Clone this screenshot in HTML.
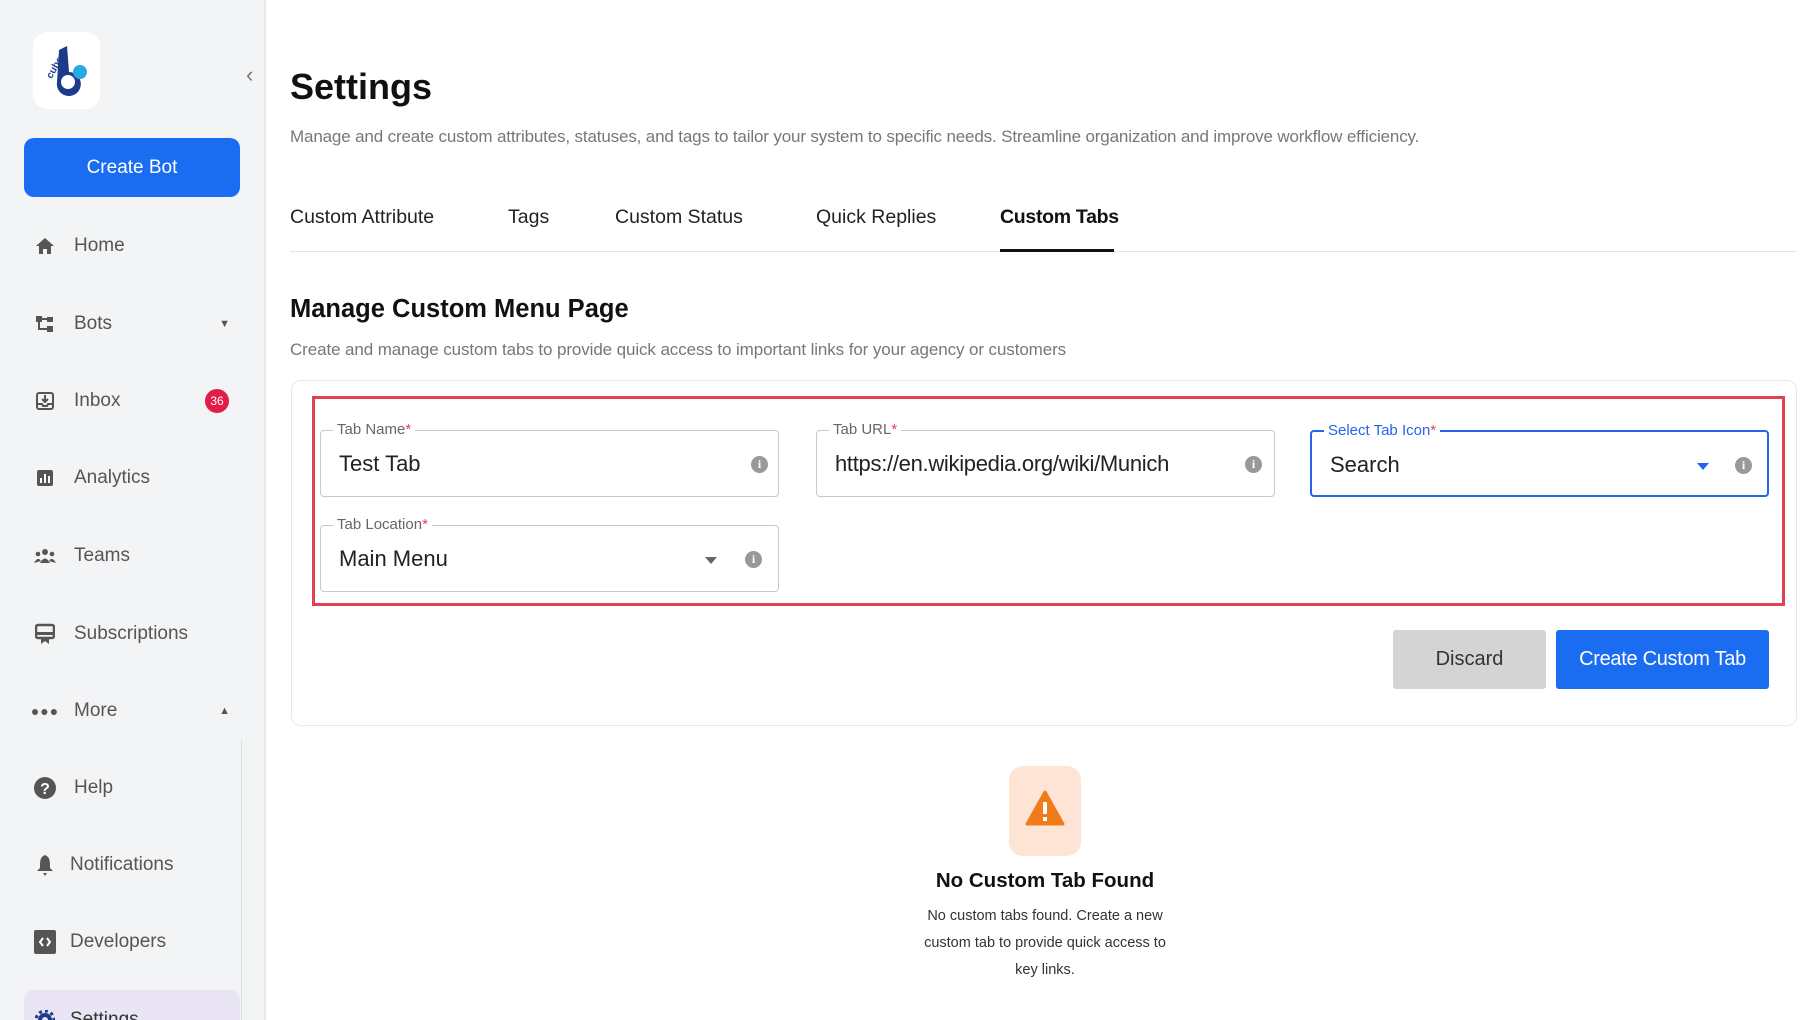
<!DOCTYPE html>
<html><head><meta charset="utf-8"><style>
*{box-sizing:border-box;margin:0;padding:0}
body{width:1806px;height:1020px;overflow:hidden;background:#fff;font-family:"Liberation Sans",sans-serif;position:relative;color:#222}
.sb{position:absolute;left:0;top:0;width:266px;height:1020px;background:#f3f4f6;border-right:2px solid #e5e7eb;overflow:hidden}
.logo{position:absolute;left:33px;top:32px;width:67px;height:77px;background:#fff;border-radius:14px}
.cb{position:absolute;left:24px;top:138px;width:216px;height:59px;background:#1a6cf0;border-radius:10px;color:#fff;font-size:19px;text-align:center;line-height:59px}
.ni{position:absolute;left:34px;font-size:19px;color:#555;display:flex;align-items:center;height:30px}
.ni .ic{width:22px;height:22px;margin-right:18px;display:flex;align-items:center;justify-content:center}
.a{position:absolute}
.tab{position:absolute;top:206px;font-size:19.5px;color:#222}
.fld{position:absolute;height:67px;border:1.5px solid #c8c8c8;border-radius:4px}
.fld .lb{position:absolute;top:-10px;left:12px;background:#fff;padding:0 4px;font-size:15px;color:#666}
.fld .lb i{color:#e0424f;font-style:normal}
.fld .v{position:absolute;left:18px;top:20px;font-size:22px;color:#222}
.info{position:absolute;top:25px;width:17px;height:17px;border-radius:50%;background:#999;color:#fff;font-size:12px;font-weight:bold;text-align:center;line-height:17px;font-family:"Liberation Serif",serif}
.dd{position:absolute;top:31px;width:0;height:0;border-left:6px solid transparent;border-right:6px solid transparent;border-top:7px solid #666}
</style></head><body>
<div class="sb">
 <div class="logo"><svg width="67" height="77" viewBox="0 0 67 77"><path d="M26 18 L34 14 L36 40 A12 12 0 1 1 24 50 Z" fill="#1e3a8a"/><circle cx="35" cy="50" r="7" fill="#fff"/><circle cx="47" cy="40" r="7" fill="#29a9e1"/><text x="12" y="44" font-size="10" fill="#1e3a8a" transform="rotate(-60 18 40)" font-weight="bold">cube</text></svg></div>
 <div class="a" style="left:246px;top:62px;color:#777;font-size:22px">&#8249;</div>
 <div class="cb">Create Bot</div>
 <div class="ni" style="top:231px"><span class="ic"><svg width="20" height="20"><path d="M10 2 L19 10 H16 V18 H12 V13 H8 V18 H4 V10 H1Z" fill="#555"/></svg></span>Home</div>
 <div class="ni" style="top:309px;width:196px"><span class="ic"><svg width="20" height="20"><rect x="1" y="2" width="6" height="6" fill="#555"/><rect x="12" y="3" width="6" height="5" fill="#555"/><rect x="12" y="12" width="6" height="6" fill="#555"/><path d="M4 8 V15 H12 M4 5 H12" stroke="#555" stroke-width="2" fill="none"/></svg></span>Bots<span style="margin-left:auto;font-size:11px">&#9660;</span></div>
 <div class="ni" style="top:386px"><span class="ic"><svg width="20" height="20"><rect x="2" y="2" width="16" height="16" rx="2" fill="none" stroke="#555" stroke-width="2"/><path d="M10 4 V11 M7 8 L10 11 L13 8 M2 13 H7 L8 15 H12 L13 13 H18" stroke="#555" stroke-width="2" fill="none"/></svg></span>Inbox</div>
 <div class="a" style="left:205px;top:389px;width:24px;height:24px;border-radius:50%;background:#e11d48;color:#fff;font-size:12px;text-align:center;line-height:24px">36</div>
 <div class="ni" style="top:463px"><span class="ic"><svg width="20" height="20"><rect x="2" y="2" width="16" height="16" rx="2" fill="#555"/><rect x="5" y="10" width="2" height="5" fill="#fff"/><rect x="9" y="6" width="2" height="9" fill="#fff"/><rect x="13" y="8" width="2" height="7" fill="#fff"/></svg></span>Analytics</div>
 <div class="ni" style="top:541px"><span class="ic"><svg width="22" height="20"><circle cx="11" cy="6" r="3" fill="#555"/><circle cx="4" cy="8" r="2.3" fill="#555"/><circle cx="18" cy="8" r="2.3" fill="#555"/><path d="M6 17 Q11 8 16 17Z M0 17 Q4 10 7 15 M15 15 Q18 10 22 17" fill="#555"/></svg></span>Teams</div>
 <div class="ni" style="top:619px"><span class="ic"><svg width="20" height="22"><rect x="1" y="2" width="18" height="13" rx="2" fill="none" stroke="#555" stroke-width="2.5"/><rect x="1" y="9" width="18" height="3" fill="#555"/><path d="M6 15 V21 L10 18 L14 21 V15Z" fill="#555"/></svg></span>Subscriptions</div>
 <div class="ni" style="top:696px;width:196px"><span class="ic" style="font-size:14px;letter-spacing:1px;color:#555">&#9679;&#9679;&#9679;</span>More<span style="margin-left:auto;font-size:11px">&#9650;</span></div>
 <div class="a" style="left:241px;top:740px;width:1px;height:280px;background:#ddd"></div>
 <div class="ni" style="top:773px"><span class="ic"><svg width="22" height="22"><circle cx="11" cy="11" r="11" fill="#555"/><text x="11" y="17" text-anchor="middle" font-size="16" font-weight="bold" fill="#fff" font-family="Liberation Sans">?</text></svg></span>Help</div>
 <div class="ni" style="top:850px;left:34px"><span class="ic" style="margin-right:14px"><svg width="18" height="22"><path d="M9 1 C4 3 4 7 4 14 L1 17 H17 L14 14 C14 7 14 3 9 1Z M7 19 H11 L9 22Z" fill="#555"/></svg></span>Notifications</div>
 <div class="ni" style="top:927px;left:34px"><span class="ic" style="margin-right:14px"><svg width="22" height="24"><rect x="0" y="0" width="22" height="24" rx="2" fill="#555"/><path d="M9 8 L6 12 L9 16 M13 8 L16 12 L13 16" stroke="#fff" stroke-width="2" fill="none"/></svg></span>Developers</div>
 <div class="a" style="left:24px;top:990px;width:216px;height:50px;background:#e9e5f5;border-radius:10px"></div>
 <div class="ni" style="top:1005px;left:34px;color:#333"><span class="ic" style="margin-right:14px"><svg width="20" height="20"><circle cx="10" cy="10" r="7" fill="#1e3a8a"/><circle cx="10" cy="10" r="9" fill="none" stroke="#1e3a8a" stroke-width="3" stroke-dasharray="3 3"/><circle cx="10" cy="10" r="3" fill="#e9e5f5"/></svg></span>Settings</div>
</div>

<div class="a" style="left:290px;top:66px;font-size:36px;font-weight:bold;color:#111">Settings</div>
<div class="a" style="left:290px;top:127px;font-size:17px;letter-spacing:-0.15px;color:#777">Manage and create custom attributes, statuses, and tags to tailor your system to specific needs. Streamline organization and improve workflow efficiency.</div>
<div class="tab" style="left:290px">Custom Attribute</div>
<div class="tab" style="left:508px">Tags</div>
<div class="tab" style="left:615px">Custom Status</div>
<div class="tab" style="left:816px">Quick Replies</div>
<div class="tab" style="left:1000px;font-weight:bold;color:#111;letter-spacing:-0.3px">Custom Tabs</div>
<div class="a" style="left:290px;top:251px;width:1507px;height:1px;background:#e5e5e5"></div>
<div class="a" style="left:1000px;top:249px;width:114px;height:3px;background:#111"></div>

<div class="a" style="left:290px;top:295px;font-size:25.5px;font-weight:bold;color:#111">Manage Custom Menu Page</div>
<div class="a" style="left:290px;top:340px;font-size:17px;letter-spacing:-0.1px;color:#777">Create and manage custom tabs to provide quick access to important links for your agency or customers</div>

<div class="a" style="left:291px;top:380px;width:1506px;height:346px;border:1px solid #e8e8e8;border-radius:10px"></div>
<div class="a" style="left:312px;top:396px;width:1473px;height:210px;border:3.5px solid #e0424f"></div>

<div class="fld" style="left:320px;top:430px;width:459px"><span class="lb">Tab Name<i>*</i></span><span class="v">Test Tab</span><span class="info" style="left:430px">i</span></div>
<div class="fld" style="left:816px;top:430px;width:459px"><span class="lb">Tab URL<i>*</i></span><span class="v" style="letter-spacing:-0.3px">https://en.wikipedia.org/wiki/Munich</span><span class="info" style="left:428px">i</span></div>
<div class="fld" style="left:1310px;top:430px;width:459px;border:2px solid #2563eb"><span class="lb" style="color:#2563eb">Select Tab Icon<i>*</i></span><span class="v">Search</span><span class="dd" style="left:385px;border-top-color:#2563eb"></span><span class="info" style="left:423px">i</span></div>
<div class="fld" style="left:320px;top:525px;width:459px"><span class="lb">Tab Location<i>*</i></span><span class="v">Main Menu</span><span class="dd" style="left:384px"></span><span class="info" style="left:424px">i</span></div>

<div class="a" style="left:1393px;top:630px;width:153px;height:59px;background:#d4d4d4;border-radius:3px;font-size:20px;color:#333;text-align:center;line-height:59px">Discard</div>
<div class="a" style="left:1556px;top:630px;width:213px;height:59px;background:#1a6cf0;border-radius:3px;font-size:20px;color:#fff;text-align:center;line-height:59px;letter-spacing:-0.3px">Create Custom Tab</div>

<div class="a" style="left:1009px;top:766px;width:72px;height:90px;background:#fde4d4;border-radius:14px"><svg width="72" height="90"><path d="M36 26 L54 58 H18Z" fill="#f07b1a" stroke="#f07b1a" stroke-width="3" stroke-linejoin="round"/><rect x="34" y="36" width="4" height="12" fill="#fff"/><rect x="34" y="51" width="4" height="4" fill="#fff"/></svg></div>
<div class="a" style="left:845px;top:869px;width:400px;text-align:center;font-size:20.5px;font-weight:bold;color:#111">No Custom Tab Found</div>
<div class="a" style="left:915px;top:903px;width:260px;text-align:center;font-size:14.5px;line-height:27px;color:#333">No custom tabs found. Create a new custom tab to provide quick access to key links.</div>
</body></html>
